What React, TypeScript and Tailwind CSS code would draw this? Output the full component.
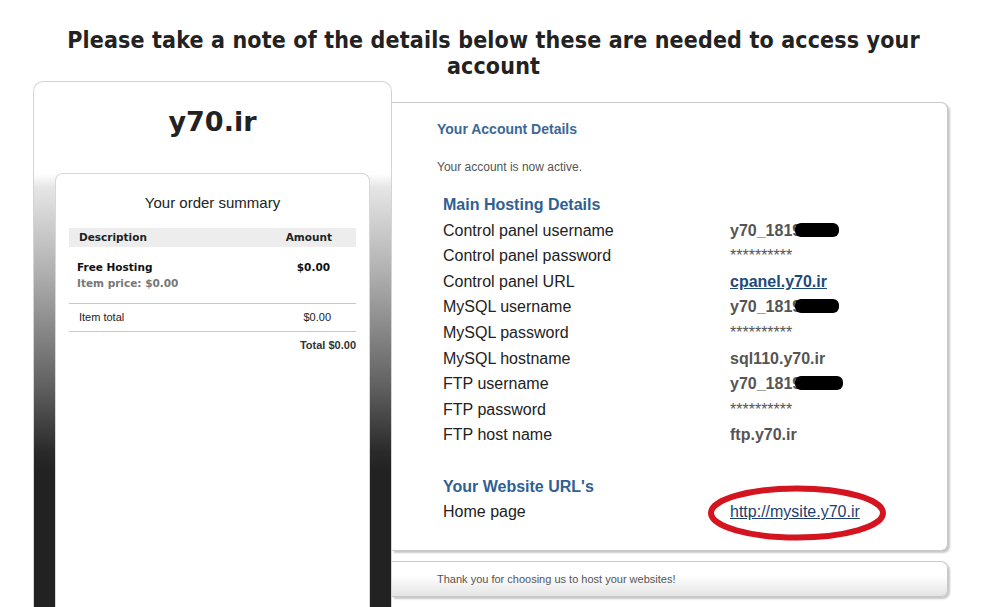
import React from "react";

const Redact = ({ w = 44 }: { w?: number }) => (
  <span className="relative -ml-[6px] inline-block h-[14px] align-[-1px] rounded-[6px] bg-black" style={{ width: w }} />
);

const rows: { label: string; value: React.ReactNode }[] = [
  { label: "Control panel username", value: <span className="font-bold text-[#555]">y70_1819<Redact /></span> },
  { label: "Control panel password", value: <span className="text-[#555]">**********</span> },
  { label: "Control panel URL", value: <a className="font-bold text-[#1e4a7a] underline">cpanel.y70.ir</a> },
  { label: "MySQL username", value: <span className="font-bold text-[#555]">y70_1819<Redact /></span> },
  { label: "MySQL password", value: <span className="text-[#555]">**********</span> },
  { label: "MySQL hostname", value: <span className="font-bold text-[#555]">sql110.y70.ir</span> },
  { label: "FTP username", value: <span className="font-bold text-[#555]">y70_1819<Redact w={48} /></span> },
  { label: "FTP password", value: <span className="text-[#555]">**********</span> },
  { label: "FTP host name", value: <span className="font-bold text-[#555]">ftp.y70.ir</span> },
];

export default function App() {
  return (
    <div className="relative h-[607px] w-[1001px] overflow-hidden bg-white font-['Liberation_Sans',Arial,sans-serif] text-[#222]">
      <h1 className="pr-[14px] pt-[27px] text-center font-['DejaVu_Sans_Condensed','DejaVu_Sans',sans-serif] text-[23px] font-bold leading-[26px] tracking-[0.15px] text-[#222] font-stretch-condensed">
        Please take a note of the details below these are needed to access your
        <br />
        account
      </h1>
      <div className="mt-[2px] flex pl-[33px]">
        {/* Left panel */}
        <div className="h-[560px] w-[359px] shrink-0 rounded-t-[10px] border border-b-0 border-[#d4d4d4] bg-[linear-gradient(to_bottom,#ffffff_0px,#ffffff_92px,#e6e6e6_105px,#b0b0b0_190px,#606060_305px,#2a2a2a_370px,#222222_390px,#222222_560px)] px-[21px]">
          <div className="pt-[22px] text-center font-['DejaVu_Sans',Verdana,sans-serif] text-[27px] font-bold leading-[36px] text-[#222]">y70.ir</div>
          <div className="mt-[33px] h-[500px] rounded-t-[8px] border border-b-0 border-[#d8d8d8] bg-white px-[13px] pt-[19px]">
            <div className="text-center text-[15px] leading-[20px] text-[#222]">Your order summary</div>
            <div className="mt-[15px] flex h-[19px] items-center justify-between bg-[#ededed] pl-[10px] pr-[24px] font-['DejaVu_Sans',Verdana,sans-serif] text-[10.5px] font-bold text-[#222]">
              <span>Description</span>
              <span>Amount</span>
            </div>
            <div className="flex justify-between pb-[12px] pl-[8px] pr-[26px] pt-[12px] font-['DejaVu_Sans',Verdana,sans-serif] text-[10.5px] font-bold leading-[16px]">
              <div>
                <div className="text-[#111]">Free Hosting</div>
                <div className="text-[#777]">Item price: $0.00</div>
              </div>
              <div className="text-[#111]">$0.00</div>
            </div>
            <div className="flex h-[29px] items-center justify-between border-y border-[#c8c8c8] pl-[10px] pr-[25px] text-[11px] text-[#222]">
              <span>Item total</span>
              <span>$0.00</span>
            </div>
            <div className="pt-[5px] text-right text-[11px] font-bold leading-[16px] text-[#333]">Total $0.00</div>
          </div>
        </div>
        {/* Right column */}
        <div className="mt-[21px] w-[556px] shrink-0">
          <div className="h-[449px] rounded-r-[7px] border-y border-r border-[#c8c8c8] bg-white pl-[45px] pt-[18px] shadow-[2px_2px_2px_rgba(0,0,0,0.22)]">
            <div className="text-[14px] font-bold leading-[17px] text-[#3b6896]">Your Account Details</div>
            <div className="mt-[22px] text-[12px] leading-[14px] text-[#555]">Your account is now active.</div>
            <div className="mt-[18px] pl-[6px]">
              <div className="h-[25.6px] text-[16px] font-bold leading-[25.6px] text-[#2f5f93]">Main Hosting Details</div>
              {rows.map((r) => (
                <div key={r.label} className="flex h-[25.6px] items-center text-[16px] leading-[25.6px]">
                  <div className="w-[287px] text-[#222]">{r.label}</div>
                  <div className="whitespace-nowrap">{r.value}</div>
                </div>
              ))}
              <div className="h-[25.6px]" />
              <div className="h-[25.6px] text-[16px] font-bold leading-[25.6px] text-[#2f5f93]">Your Website URL's</div>
              <div className="flex h-[25.6px] items-center text-[16px] leading-[25.6px]">
                <div className="w-[287px] text-[#222]">Home page</div>
                <div className="relative">
                  <a className="text-[#1d3f6e] underline">http://mysite.y70.ir</a>
                  <svg className="absolute left-[-22px] top-[-14px]" width="184" height="58" viewBox="0 0 184 58">
                    <ellipse cx="89" cy="28" rx="86" ry="24.5" fill="none" stroke="#d4141e" strokeWidth="6" />
                  </svg>
                </div>
              </div>
            </div>
          </div>
          <div className="mt-[10px] flex h-[36px] items-center rounded-r-[7px] border-y border-r border-[#c8c8c8] bg-[linear-gradient(to_bottom,#ffffff,#ffffff_40%,#e4e4e4)] pl-[45px] text-[11px] text-[#555] shadow-[2px_2px_2px_rgba(0,0,0,0.22)]">
            Thank you for choosing us to host your websites!
          </div>
        </div>
      </div>
    </div>
  );
}
